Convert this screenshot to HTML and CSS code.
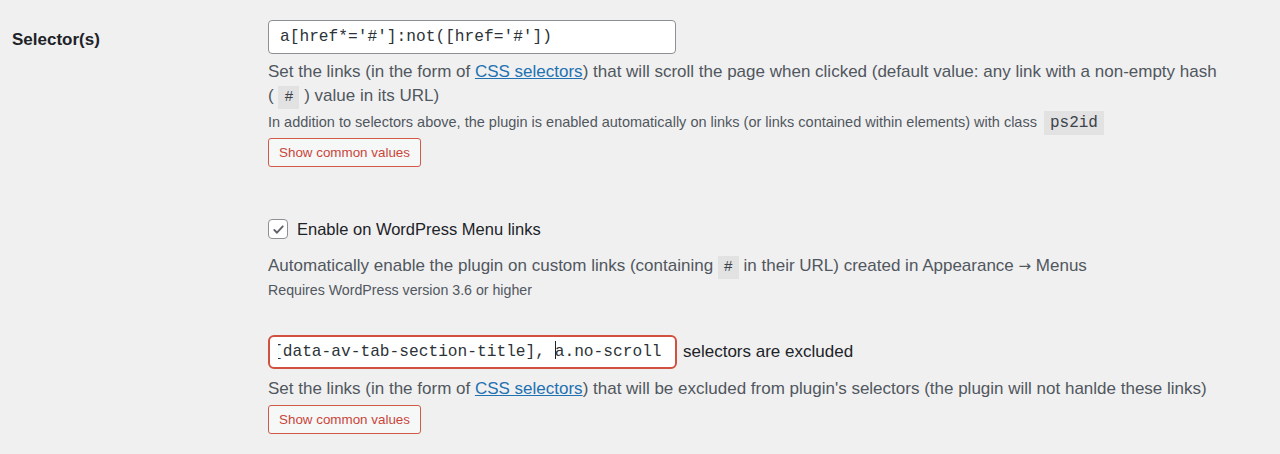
FILE: index.html
```html
<!DOCTYPE html>
<html lang="en">
<head>
<meta charset="utf-8">
<title>Page scroll to id settings</title>
<link rel="stylesheet" href="styles.css">
</head>
<body>
<div class="form-row">
  <div class="label">Selector(s)</div>
  <div class="field">
    <input class="text-input" type="text" value="a[href*='#']:not([href='#'])">
    <p class="desc">Set the links (in the form of <a href="#">CSS selectors</a>) that will scroll the page when clicked (default value: any link with a non-empty hash <span class="nowrap">( <code>#</code> )</span> value in its URL)</p>
    <p class="small">In addition to selectors above, the plugin is enabled automatically on links (or links contained within elements) with class <code class="code-lg">ps2id</code></p>
    <button class="btn" type="button">Show common values</button>

    <label class="check-row">
      <span class="checkbox"><svg viewBox="0 0 20 20" width="17" height="17"><path d="M5 10.5l3.2 3.3L15 6.3" fill="none" stroke="#5f6368" stroke-width="2.2" stroke-linecap="round" stroke-linejoin="round"/></svg></span>
      <span class="check-label">Enable on WordPress Menu links</span>
    </label>
    <p class="desc desc-auto">Automatically enable the plugin on custom links (containing <code>#</code> in their URL) created in Appearance <span class="arrow">→</span> Menus</p>
    <p class="small small-req">Requires WordPress version 3.6 or higher</p>

    <div class="exclude-row">
      <div class="text-input error" role="textbox"><div class="clip"><span class="scroll-text">[data-av-tab-section-title], <span class="caret"></span>a.no-scroll</span></div></div>
      <span class="after">selectors are excluded</span>
    </div>
    <p class="desc desc-ex">Set the links (in the form of <a href="#">CSS selectors</a>) that will be excluded from plugin's selectors (the plugin will not hanlde these links)</p>
    <button class="btn btn-last" type="button">Show common values</button>
  </div>
</div>
</body>
</html>
```

FILE: styles.css
```css
html, body {
  margin: 0;
  padding: 0;
  background: #f0f0f1;
}
body {
  font-family: "Liberation Sans", Arial, sans-serif;
  color: #1d2327;
  font-size: 17px;
}
.form-row {
  display: grid;
  grid-template-columns: 256px 1fr;
  padding: 20px 0 0 12px;
}
.label {
  font-weight: bold;
  font-size: 17px;
  line-height: 40px;
  color: #1d2327;
}
.field {
  display: flex;
  flex-direction: column;
  align-items: flex-start;
}
.text-input {
  box-sizing: border-box;
  width: 408px;
  height: 34px;
  border: 1px solid #8c8f94;
  border-radius: 4px;
  background: #fff;
  font-family: "Liberation Mono", "DejaVu Sans Mono", monospace;
  font-size: 16.2px;
  color: #2c3338;
  padding: 0 11px;
  margin: 0;
  outline: none;
}
.desc {
  margin: 6px 0 0;
  font-size: 17px;
  line-height: 24px;
  color: #50575e;
  max-width: 960px;
}
.desc a {
  color: #2271b1;
  text-decoration: underline;
}
.nowrap { white-space: nowrap; }
.arrow { font-family: "DejaVu Sans", sans-serif; font-size: 15px; }
code {
  font-family: "Liberation Mono", "DejaVu Sans Mono", monospace;
  background: #e2e2e3;
  color: #3c434a;
  font-size: 15px;
  padding: 3px 6px;
}
.small {
  margin: 1px 0 0;
  font-size: 14.5px;
  line-height: 22px;
  color: #50575e;
}
.small-req {
  margin-top: 0;
  font-size: 14.2px;
  line-height: 20px;
}
.code-lg {
  font-size: 16px;
  padding: 3px 6px;
  margin-left: 3px;
}
.btn {
  margin-top: 4px;
  height: 29px;
  box-sizing: border-box;
  padding: 0 10px;
  border: 1px solid #d05a46;
  border-radius: 3px;
  background: #f6f7f7;
  color: #c9463a;
  font-family: "Liberation Sans", Arial, sans-serif;
  font-size: 13.4px;
  line-height: 27px;
  white-space: nowrap;
}
.check-row {
  display: flex;
  align-items: center;
  gap: 9px;
  margin-top: 52px;
  height: 20px;
}
.checkbox {
  box-sizing: border-box;
  width: 20px;
  height: 20px;
  border: 1px solid #8c8f94;
  border-radius: 4px;
  background: #fff;
  display: flex;
  align-items: center;
  justify-content: center;
}
.check-label {
  font-size: 16.5px;
  color: #1d2327;
}
.desc-auto {
  margin-top: 15px;
}
.exclude-row {
  display: flex;
  align-items: center;
  gap: 6px;
  margin-top: 35px;
}
.text-input.error {
  border: 2px solid #d0513f;
  border-radius: 6px;
  white-space: nowrap;
  padding: 0 8px;
  line-height: 30px;
  width: 409px;
}
.clip {
  overflow: hidden;
}
.scroll-text {
  display: inline-block;
  margin-left: -5px;
}
.caret {
  display: inline-block;
  width: 1px;
  height: 18px;
  background: #1d2327;
  vertical-align: -3px;
  margin-right: -1px;
}
.after {
  font-size: 17px;
  color: #1d2327;
}
.desc-ex {
  margin-top: 8px;
}
.btn-last {
  margin-top: 4px;
}
```
